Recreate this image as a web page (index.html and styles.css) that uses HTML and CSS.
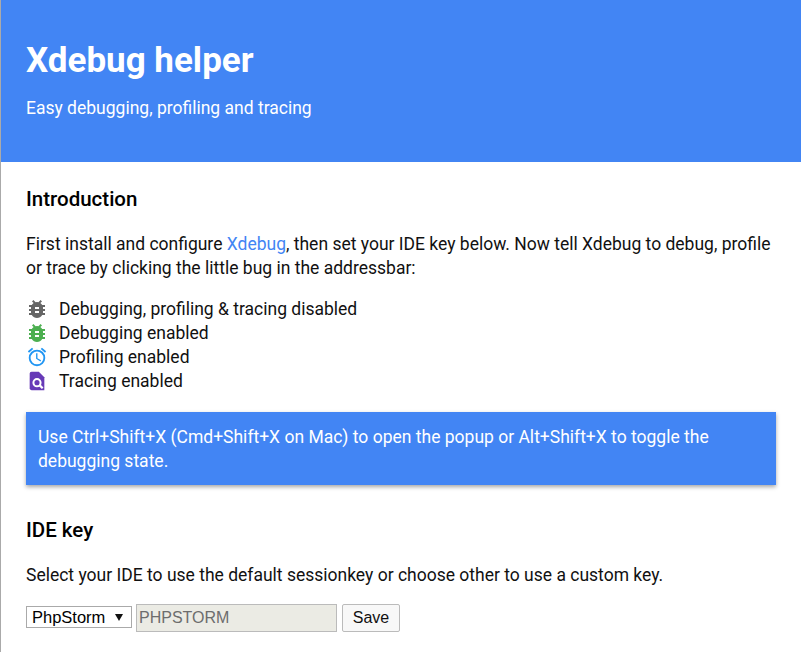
FILE: index.html
```html
<!DOCTYPE html>
<html lang="en">
<head>
<meta charset="utf-8">
<title>Xdebug helper</title>
<link rel="stylesheet" href="styles.css">
</head>
<body>
<header class="hero">
  <h1>Xdebug helper</h1>
  <p>Easy debugging, profiling and tracing</p>
</header>
<main class="content">
  <h2>Introduction</h2>
  <p class="intro">First install and configure <a href="#">Xdebug</a>, then set your IDE key below. Now tell Xdebug to debug, profile or trace by clicking the little bug in the addressbar:</p>
  <ul class="legend">
    <li><svg class="icon icon-bug" viewBox="0 0 24 24"><path fill="#666" d="M20 8h-2.81a6 6 0 0 0-1.82-1.96L17 4.41 15.59 3l-2.17 2.17a6 6 0 0 0-2.83 0L8.41 3 7 4.41l1.62 1.63A6 6 0 0 0 6.81 8H4v2h2.09A7 7 0 0 0 6 11v1H4v2h2v1c0 .34.04.67.09 1H4v2h2.81a6 6 0 0 0 10.38 0H20v-2h-2.09c.05-.33.09-.66.09-1v-1h2v-2h-2v-1c0-.34-.04-.67-.09-1H20V8zm-6 8h-4v-2h4v2zm0-4h-4v-2h4v2z"/></svg>Debugging, profiling &amp; tracing disabled</li>
    <li><svg class="icon icon-bug" viewBox="0 0 24 24"><path fill="#4caf50" d="M20 8h-2.81a6 6 0 0 0-1.82-1.96L17 4.41 15.59 3l-2.17 2.17a6 6 0 0 0-2.83 0L8.41 3 7 4.41l1.62 1.63A6 6 0 0 0 6.81 8H4v2h2.09A7 7 0 0 0 6 11v1H4v2h2v1c0 .34.04.67.09 1H4v2h2.81a6 6 0 0 0 10.38 0H20v-2h-2.09c.05-.33.09-.66.09-1v-1h2v-2h-2v-1c0-.34-.04-.67-.09-1H20V8zm-6 8h-4v-2h4v2zm0-4h-4v-2h4v2z"/></svg>Debugging enabled</li>
    <li><svg class="icon" viewBox="0 0 24 24"><path fill="#2196f3" d="M22 5.72l-4.6-3.86-1.29 1.53 4.6 3.86L22 5.72zM7.88 3.39L6.6 1.86 2 5.71l1.29 1.53 4.59-3.85zM12.5 8H11v6l4.75 2.85.75-1.23-4-2.37V8zM12 4a9 9 0 1 0 .01 18.01A9 9 0 0 0 12 4zm0 16a7 7 0 1 1 0-14 7 7 0 0 1 0 14z"/></svg>Profiling enabled</li>
    <li><svg class="icon" viewBox="0 0 24 24"><path fill="#673ab7" d="M14 2H6a2 2 0 0 0-2 2v16a2 2 0 0 0 2 2h14V8l-6-6z"/><circle cx="12" cy="13.8" r="3.9" fill="#673ab7" stroke="#fff" stroke-width="2.2"/><path d="M15 16.8l3.2 3.2" stroke="#fff" stroke-width="2.4" fill="none"/></svg>Tracing enabled</li>
  </ul>
  <div class="notice">Use Ctrl+Shift+X (Cmd+Shift+X on Mac) to open the popup or Alt+Shift+X to toggle the debugging state.</div>
  <h2 class="ide">IDE key</h2>
  <p class="select-note">Select your IDE to use the default sessionkey or choose other to use a custom key.</p>
  <form class="controls">
    <span class="select-wrap"><select class="ide-select"><option>PhpStorm</option></select></span>
    <input class="ide-key" type="text" value="PHPSTORM" disabled>
    <button class="save" type="button">Save</button>
  </form>
</main>
</body>
</html>
```

FILE: styles.css
```css
html, body { height: 100%; }
body {
  margin: 0;
  border-left: 1px solid #aaa;
  font-family: Roboto, sans-serif;
  font-size: 17.5px;
  line-height: 24px;
  color: #111;
  background: #fff;
  overflow: hidden;
}
.hero {
  background: #4285f4;
  color: #fff;
  height: 162px;
  box-sizing: border-box;
  padding: 39px 25px 0;
}
.hero h1 {
  margin: 0;
  font-size: 35px;
  line-height: 44px;
  font-weight: 700;
}
.hero p {
  margin: 13px 0 0;
}
.content {
  padding: 25px 25px 0;
}
h2 {
  margin: 0;
  font-size: 20.5px;
  line-height: 24px;
  font-weight: 500;
  color: #000;
}
.intro {
  margin: 21px 0 0;
}
a { color: #4285f4; text-decoration: none; }
.legend {
  list-style: none;
  margin: 17px 0 0;
  padding: 0;
}
.legend li {
  display: flex;
  align-items: center;
  height: 24px;
}
.icon {
  width: 22px;
  height: 22px;
  margin-right: 11px;
  flex: none;
}
.icon-bug {
  width: 24px;
  height: 24px;
  margin: 0 10px 0 -1px;
}
.notice {
  margin-top: 19px;
  background: #4285f4;
  color: #fff;
  padding: 13px 12px 12px;
  box-shadow: 0 2px 4px rgba(0, 0, 0, .35);
}
.ide { margin-top: 33px; }
.select-note { margin: 21px 0 0; }
.controls {
  display: flex;
  align-items: flex-start;
  gap: 4px;
  margin-top: 17px;
}
.select-wrap {
  position: relative;
  display: block;
  width: 106px;
  height: 22px;
  margin-top: 2px;
}
.select-wrap::after {
  content: "";
  position: absolute;
  left: 89px;
  top: 8px;
  border-left: 4px solid transparent;
  border-right: 4px solid transparent;
  border-top: 7px solid #111;
  pointer-events: none;
}
.ide-select, .ide-key, .save {
  font-family: "Liberation Sans", Arial, sans-serif;
  font-size: 16px;
  box-sizing: border-box;
}
.ide-select {
  appearance: none;
  display: block;
  width: 100%;
  height: 100%;
  padding: 0 0 0 5px;
  font-size: 16.5px;
  background: #fff;
  border: 1px solid #aaa;
  border-radius: 0;
  color: #000;
}
.ide-key {
  width: 201px;
  height: 28px;
  padding: 1px 2px;
  background: #ebebe4;
  border: 1px solid #bbb;
  color: #6d6d6d;
}
.save {
  width: 58px;
  height: 28px;
  margin-left: 1px;
  padding: 0;
  background: #f8f8f8;
  border: 1px solid #bbb;
  border-radius: 2px;
  color: #111;
}
```
